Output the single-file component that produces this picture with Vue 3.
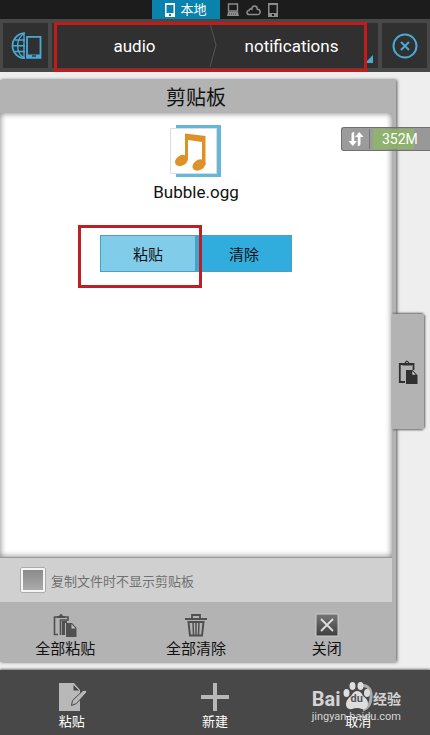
<template>
  <div class="file-manager">
    <nav class="location-tabs">
      <button class="location-tab active">
        <svg width="10" height="14" viewBox="0 0 10 14">
          <path d="M0 0h10v14H0z M1.500 2v8h7V2z M4 11v2h2v-2z" fill="#fff" fill-rule="evenodd" />
        </svg>
        <span>本地</span>
      </button>
      <button class="location-tab" aria-label="LAN">
        <svg width="12" height="14" viewBox="0 0 12 14">
          <path d="M1.5 1h9v7h-9z" fill="none" stroke="#8d8d8d" stroke-width="1.4" />
          <path d="M1 9h10l1 4H0z" fill="#8d8d8d" />
          <path d="M2 11h8" stroke="#444" stroke-dasharray="1 1" />
        </svg>
      </button>
      <button class="location-tab" aria-label="Cloud">
        <svg width="15" height="12" viewBox="0 0 15 12">
          <path d="M3.4 10.5C.4 10.5.2 6.8 3 6.5C3.4 4.8 5 4.6 5.7 5.2C6 .8 11.3.8 11.3 5.2C15 5.2 15 10.5 12 10.5Z" fill="none" stroke="#8d8d8d" stroke-width="1.5" />
        </svg>
      </button>
      <button class="location-tab" aria-label="Device">
        <svg width="10" height="14" viewBox="0 0 10 14">
          <path d="M0 0h10v14H0z M1.500 2v8h7V2z M4 11v2h2v-2z" fill="#8d8d8d" fill-rule="evenodd" />
        </svg>
      </button>
    </nav>

    <header class="toolbar">
      <button class="tool-button" aria-label="Network">
        <svg width="32" height="28" viewBox="0 0 32 28" fill="none" stroke="#4aa9d4">
          <path d="M15 1.200A12.500 12.500 0 0 0 15 26.200" stroke-width="1.800" />
          <path d="M14 1.500C5.500 7 5.500 20.500 14 26M14 1.500V26M5 8H15M3 13.700H15M5 19.500H15" stroke-width="1.400" />
          <path d="M17 4.800h13.500v21H17z" stroke-width="1.800" />
          <path d="M16.500 22.500h14V26h-14z" fill="#4aa9d4" stroke="none" />
          <path d="M22 24h4" stroke="#303030" stroke-width="1.400" />
        </svg>
      </button>
      <div class="breadcrumb">
        <button class="crumb">audio</button>
        <svg class="crumb-arrow" width="8" height="44" viewBox="0 0 8 44">
          <path d="M1 0L7 22L1 44" fill="none" stroke="#555" />
        </svg>
        <button class="crumb">notifications</button>
        <div class="crumb-corner"></div>
        <div class="crumb-highlight"></div>
      </div>
      <button class="tool-button" aria-label="Close window">
        <svg width="26" height="26" viewBox="0 0 26 26" fill="none" stroke="#4aa9d4" stroke-width="2">
          <circle cx="13" cy="13" r="11.5" />
          <path d="M9 9l8 8M17 9l-8 8" />
        </svg>
      </button>
    </header>

    <main class="workspace">
      <section class="clipboard">
        <h1 class="clipboard-title">剪贴板</h1>
        <div class="clipboard-body">
          <svg width="52" height="54" viewBox="0 0 52 54">
            <path d="M6 1h45v52H6z" fill="#65b7d9" />
            <path d="M.5 4.500h46v45H.5z" fill="#fff" stroke="#ddd" />
            <path d="M15 9.500L35.500 12V41H32V18L18 16V36H15z" fill="#df9129" />
            <ellipse cx="11.500" cy="36.500" rx="7" ry="5" transform="rotate(-32 11.500 36.500)" fill="#df9129" />
            <ellipse cx="29" cy="41" rx="7" ry="5" transform="rotate(-32 29 41)" fill="#df9129" />
          </svg>
          <p class="file-name">Bubble.ogg</p>
          <div class="file-actions">
            <button class="file-action pressed">粘贴</button>
            <button class="file-action">清除</button>
            <div class="paste-highlight"></div>
          </div>
        </div>
        <div class="option">
          <input id="hide-clipboard" v-model="hideClipboard" type="checkbox" />
          <label for="hide-clipboard">复制文件时不显示剪贴板</label>
        </div>
        <div class="clipboard-actions">
          <button class="clipboard-action">
            <svg width="24" height="24" viewBox="0 0 24 24">
              <path d="M5 21.500H1.500V4H15v4M7.500 22V7H14" fill="none" stroke="#505050" stroke-width="1.600" />
              <path d="M4 5V3h2q2-4 4 0h2v2z" fill="#505050" />
              <path d="M9 8h5v2h-2v12H9zM13 10h6l4.500 5v9H13z" fill="#505050" />
              <path d="M18.500 11v4.500H22.500z" fill="#c4c4c4" />
            </svg>
            <span>全部粘贴</span>
          </button>
          <button class="clipboard-action">
            <svg width="24" height="24" viewBox="0 0 24 24" fill="none" stroke="#505050">
              <path d="M1 6h22" stroke-width="2" />
              <path d="M8 5V2h8v3" stroke-width="1.800" />
              <path d="M4.500 9h15L18 22.500H6z" stroke-width="2" />
              <path d="M9 9l.5 13M12 9v13M15 9l-.5 13" stroke-width="1.500" />
            </svg>
            <span>全部清除</span>
          </button>
          <button class="clipboard-action">
            <svg width="24" height="24" viewBox="0 0 24 24">
              <defs>
                <linearGradient id="closeFill" x1="0" y1="0" x2="0" y2="1">
                  <stop offset="0" stop-color="#777" />
                  <stop offset="1" stop-color="#3e3e3e" />
                </linearGradient>
              </defs>
              <path d="M1 1h22v22H1z" fill="url(#closeFill)" stroke="#ccc" />
              <path d="M6 6l12 12M18 6L6 18" stroke="#ddd" stroke-width="1.800" />
            </svg>
            <span>关闭</span>
          </button>
        </div>
        <button class="drawer-handle" aria-label="Clipboard">
          <svg width="20" height="26" viewBox="0 0 20 26">
            <path d="M7 23H1.800V5H15.500v6" fill="none" stroke="#303030" stroke-width="1.800" />
            <path d="M4.500 6.500V4h2q2.200-5 5 0H14v2.500z" fill="#303030" />
            <path d="M8.300 3.500h1.600" stroke="#b4b4b4" />
            <path d="M8 11h6.500l5 5.500V25H8z" fill="#303030" />
            <path d="M14 11.500v4.500h4.300z" fill="#d8d8d8" stroke="#303030" stroke-width=".7" />
          </svg>
        </button>
      </section>

      <div class="memory">
        <svg width="16" height="16" viewBox="0 0 16 16" fill="#fff">
          <path d="M6 1Q3.500 1 3.500 3.500V10H0.500L4.800 15L9 10H6.200V1zM10 15Q12.500 15 12.500 12.500V6H15.500L11.200 1L7 6H9.800V15z" />
        </svg>
        <span class="memory-value">352M</span>
      </div>
    </main>

    <footer class="bottom-bar">
      <button v-for="item in bottomItems" :key="item.label" class="bottom-item">
        <svg v-if="item.icon === 'paste'" width="30" height="30" viewBox="0 0 30 30">
          <path d="M2 1h15l6 7v21H2z" fill="#b8b8b8" />
          <path d="M16 2v7h7z" fill="#484848" stroke="#b8b8b8" />
          <path d="M14.500 23.500l1-5L26 8.500q3-1.500 4 1.500L19.500 21.500z" fill="#b8b8b8" stroke="#484848" />
        </svg>
        <svg v-else-if="item.icon === 'add'" width="30" height="30" viewBox="0 0 30 30">
          <path d="M13 1h4v12h12v4H17v12h-4V17H1v-4h12z" fill="#b8b8b8" />
        </svg>
        <svg v-else width="30" height="30" viewBox="0 0 30 30">
          <path d="M18 3Q29 4 28 15Q28 25 20 28" fill="none" stroke="#aaa" stroke-width="3" />
          <g fill="#dedede">
            <ellipse cx="3.500" cy="11" rx="3" ry="4" />
            <ellipse cx="9.500" cy="4" rx="3" ry="4" />
            <ellipse cx="17.500" cy="4" rx="3" ry="4" />
            <ellipse cx="24" cy="11" rx="3" ry="4" />
            <path d="M14 9Q18 9 20 14Q25 17 25 22Q24 28 19 27Q14 25 9 27Q3 28 3 22Q3 18 8 14Q11 9 14 9z" />
          </g>
        </svg>
        <span>{{ item.label }}</span>
      </button>
      <div class="watermark">
        <div class="watermark-brand">
          <b>Bai</b><i>du</i><strong>经验</strong>
        </div>
        <span>jingyan.baidu.com</span>
      </div>
    </footer>
  </div>
</template>

<script setup>
import { ref } from 'vue'

const hideClipboard = ref(false)

const bottomItems = [
  { label: '粘贴', icon: 'paste' },
  { label: '新建', icon: 'add' },
  { label: '取消', icon: 'cancel' }
]
</script>

<style>
body {
  margin: 0;
}
</style>

<style scoped>
.file-manager {
  display: flex;
  flex-direction: column;
  min-height: 100vh;
  background: #eee;
  font-family: Roboto, "Noto Sans CJK SC", sans-serif;
}

button {
  margin: 0;
  padding: 0;
  border: 0;
  background: none;
  color: inherit;
  font: inherit;
  cursor: pointer;
}

svg {
  display: block;
  flex: none;
}

.location-tabs {
  display: flex;
  justify-content: center;
  align-items: center;
  gap: 7px;
  height: 19px;
  background: #1c1c1c;
}

.location-tab {
  display: flex;
  align-items: center;
  height: 100%;
}

.location-tab.active {
  justify-content: center;
  gap: 5px;
  width: 68px;
  background: #0983ad;
  color: #fff;
  font-size: 13px;
  line-height: 19px;
}

.toolbar {
  display: flex;
  gap: 4px;
  padding: 4px 3px;
  background: #484848;
}

.tool-button {
  display: flex;
  align-items: center;
  justify-content: center;
  width: 45px;
  height: 45px;
  background: #303030;
}

.breadcrumb {
  position: relative;
  display: flex;
  flex: 1;
  padding: 0 12px 0 8px;
  background: #303030;
  color: #fff;
  font-size: 17px;
}

.crumb {
  flex: 1;
}

.crumb-corner {
  position: absolute;
  right: 5px;
  bottom: 5px;
  border: 4px solid transparent;
  border-right-color: #4aa9d4;
  border-bottom-color: #4aa9d4;
}

.crumb-highlight {
  position: absolute;
  inset: -1px 11px -4px 2px;
  border: 3px solid #c41a1a;
  pointer-events: none;
}

.workspace {
  position: relative;
  display: flex;
  flex: 1;
  padding: 8px 34px 8px 0;
}

.clipboard {
  position: relative;
  display: flex;
  flex: 1;
  flex-direction: column;
  padding-right: 4px;
  background: #b3b3b3;
  box-shadow: 1px 0 3px #555;
}

.clipboard-title {
  margin: 0;
  height: 33px;
  color: #111;
  font-size: 20px;
  font-weight: 400;
  line-height: 36px;
  text-align: center;
}

.clipboard-body {
  display: flex;
  flex: 1;
  flex-direction: column;
  align-items: center;
  padding-top: 11px;
  background: #fff;
  box-shadow: inset 0 0 6px #777;
}

.file-name {
  margin: 2px 0 31px;
  color: #111;
  font-size: 17px;
  line-height: 24px;
}

.file-actions {
  position: relative;
  display: flex;
}

.file-action {
  width: 96px;
  height: 37px;
  border: 1px solid #4b9fc2;
  background: #31addd;
  color: #111;
  font-size: 15px;
}

.file-action.pressed {
  background: #80cce9;
}

.paste-highlight {
  position: absolute;
  inset: -10px 90px -16px -22px;
  border: 3px solid #bd2024;
  pointer-events: none;
}

.option {
  display: flex;
  align-items: center;
  gap: 5px;
  height: 44px;
  padding-left: 20px;
  border-top: 1px solid #999;
  background: #d0d0d0;
  color: #707070;
  font-size: 13px;
}

.option input {
  appearance: none;
  width: 26px;
  height: 26px;
  margin: 0;
  border: 3px solid #f5f5f5;
  border-radius: 2px;
  outline: 1px solid #aaa;
  outline-offset: -1px;
  background: linear-gradient(#8a8a8a, #ababab);
}

.clipboard-actions {
  display: flex;
  height: 60px;
}

.clipboard-action {
  display: flex;
  flex: 1;
  flex-direction: column;
  align-items: center;
  padding-top: 11px;
  color: #111;
  font-size: 15px;
  line-height: 24px;
}

.drawer-handle {
  position: absolute;
  top: 234px;
  right: -28px;
  display: flex;
  align-items: center;
  justify-content: center;
  width: 32px;
  height: 115px;
  background: #b3b3b3;
  box-shadow: 2px 0 2px -1px #666, 0 2px 2px -1px #666, 0 -2px 2px -1px #666;
}

.memory {
  position: absolute;
  top: 55px;
  right: 0;
  display: flex;
  align-items: center;
  gap: 5px;
  box-sizing: border-box;
  width: 89px;
  height: 24px;
  padding-left: 6px;
  border: 1px solid #707070;
  border-right: 0;
  border-radius: 3px 0 0 3px;
  background: rgba(130, 130, 130, 0.8);
  color: #fff;
  font-size: 14px;
}

.memory-value {
  flex: 1;
  padding-left: 12px;
  border-left: 1px solid #777;
  background: linear-gradient(90deg, transparent 3px, rgba(138, 190, 92, 0.7) 3px, rgba(138, 190, 92, 0.7) 44px, transparent 44px);
  line-height: 20px;
}

.bottom-bar {
  position: relative;
  display: flex;
  height: 65px;
  background: #484848;
  box-shadow: 0 -1px 2px #777;
}

.bottom-item {
  display: flex;
  flex: 1;
  flex-direction: column;
  align-items: center;
  gap: 1px;
  padding-top: 12px;
  color: #fff;
  font-size: 13px;
  line-height: 18px;
}

.watermark {
  position: absolute;
  top: 17px;
  right: 29px;
  color: #d4d4d4;
  font-size: 11px;
  line-height: 12px;
  pointer-events: none;
}

.watermark-brand {
  display: flex;
  justify-content: space-between;
  align-items: center;
  height: 24px;
}

.watermark-brand b {
  font-size: 20px;
}

.watermark-brand i {
  color: #555;
  font-size: 11px;
  font-style: normal;
  font-weight: 700;
}

.watermark-brand strong {
  font-size: 14px;
}
</style>
